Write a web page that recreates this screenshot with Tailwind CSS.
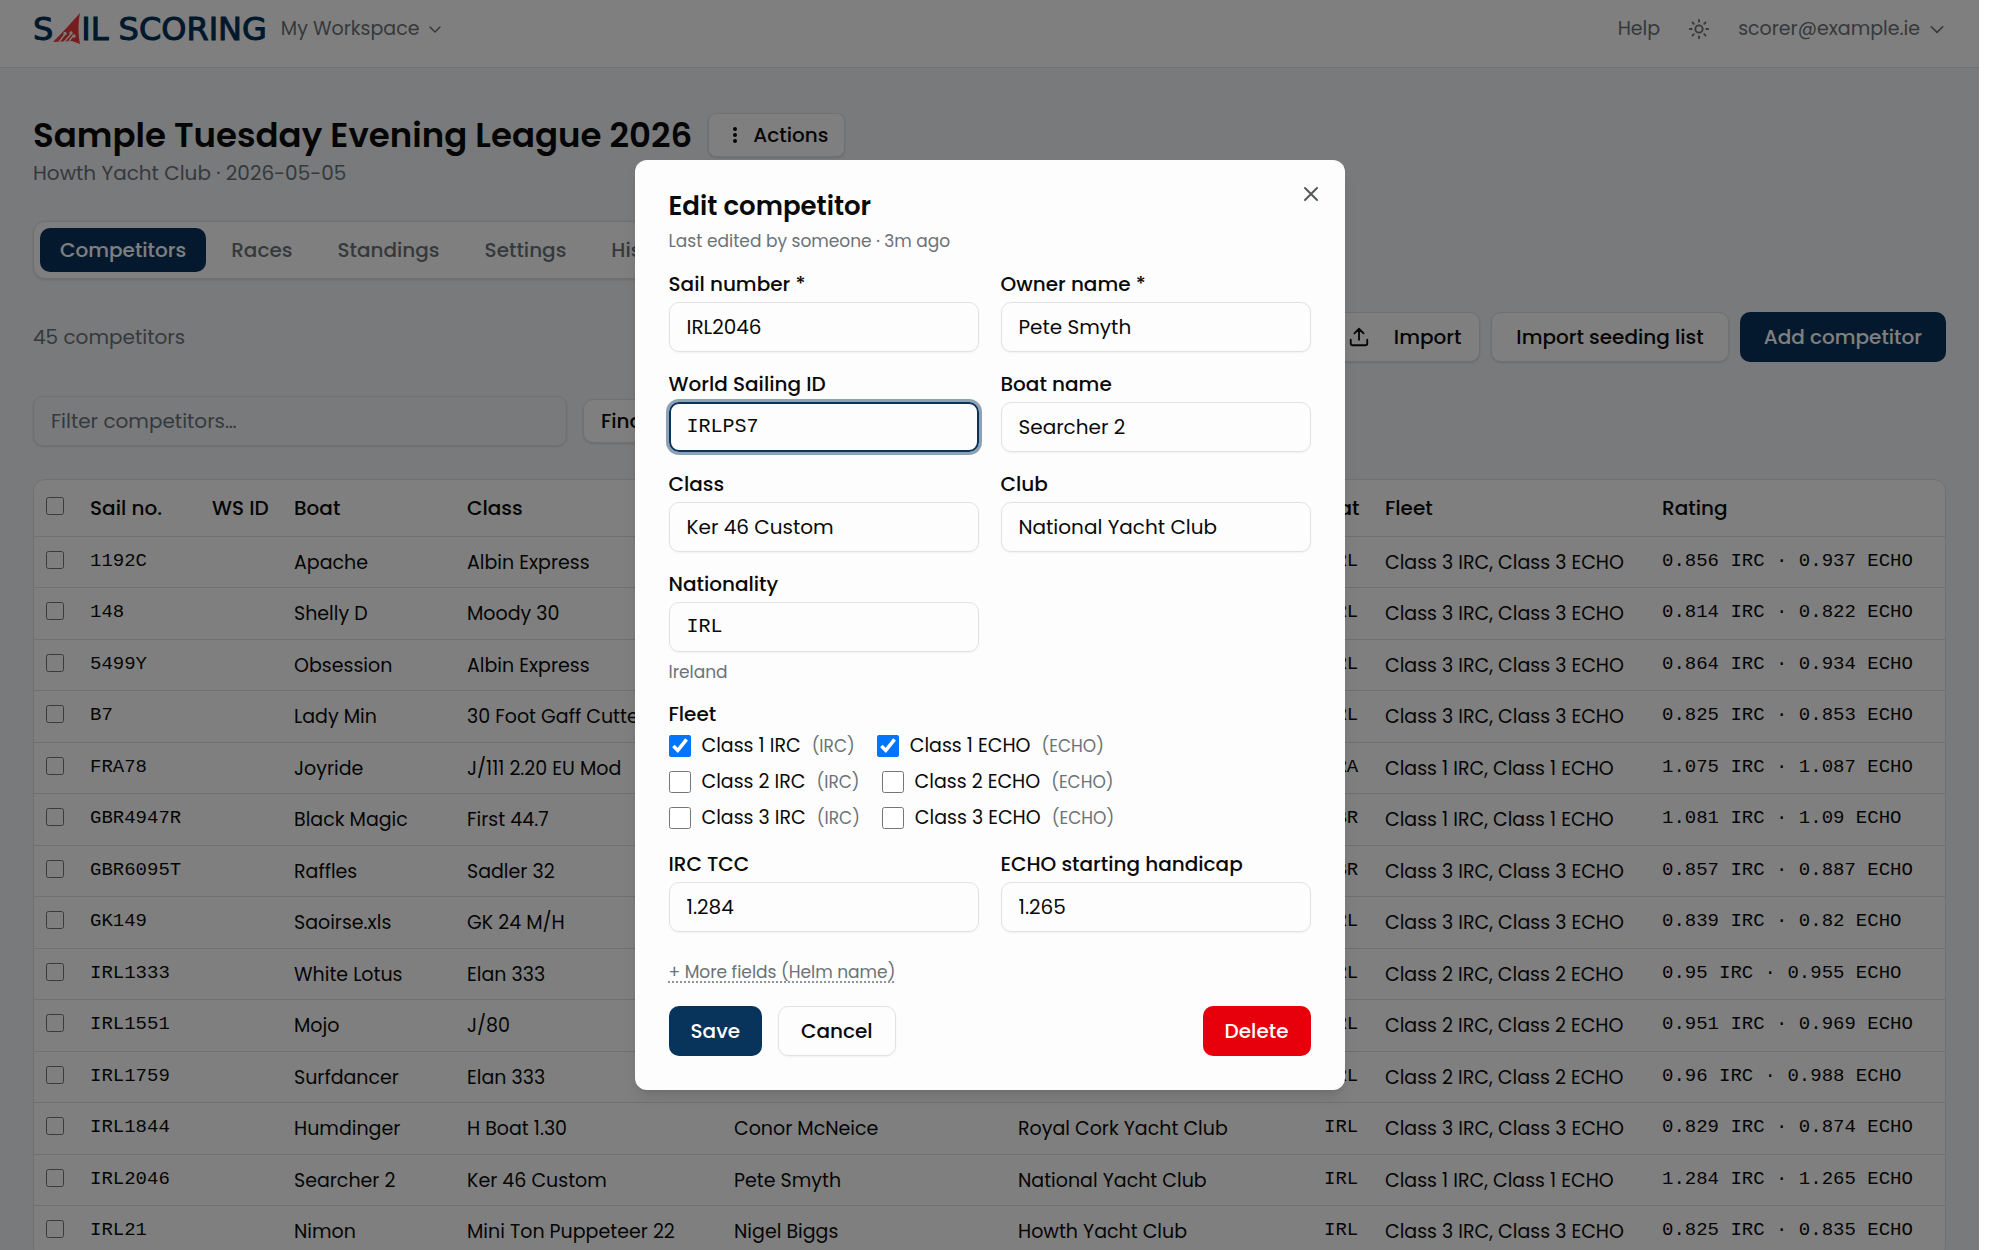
<!DOCTYPE html>
<html lang="en">
<head>
    <meta charset="UTF-8">
    <meta name="viewport" content="width=device-width, initial-scale=1.0">
    <title>Sail Scoring - Competitors</title>
    <script src="https://cdn.jsdelivr.net/npm/@tailwindcss/browser@4"></script>
</head>
<body class="h-screen overflow-hidden bg-white font-[Poppins,Inter,sans-serif] text-[20px] leading-6 text-[#0a0a0a]">
    <div class="relative mr-[21px] h-full overflow-hidden bg-[#f2f5f8]">

        <!-- Header -->
        <header class="flex items-center justify-between border-b border-[#dde1e5] bg-white px-[33px] pt-[9px] pb-[18px] text-[19px] text-[#6b7278]">
            <div class="flex h-10 items-center gap-[14px]">
                <a href="#" aria-label="Sail Scoring" class="flex items-center font-['DejaVu_Sans'] text-[32px] leading-10 text-[#003057] [-webkit-text-stroke:1px_#003057]">
                    <span>S</span>
                    <svg class="h-8 w-7" viewBox="0 0 28 32">
                        <path d="M27 0C19 9 9 20 0 29l19-1 8 3c-2-9-2-21 0-31z" fill="#f03a3a"/>
                        <g stroke="#fff" stroke-width="1.3" fill="none">
                            <path d="M6 29l6-8M11 29l7-8M16 28l4-5"/>
                            <circle cx="12" cy="20.500" r="1"/><circle cx="18" cy="20" r="1"/><circle cx="21" cy="23" r="1"/>
                        </g>
                    </svg>
                    <span>IL</span>
                    <span class="ml-[10px]">SCORING</span>
                </a>
                <button class="flex items-center gap-2">
                    My Workspace
                    <svg class="size-4" viewBox="0 0 16 16" fill="none" stroke="currentColor" stroke-width="1.5" stroke-linecap="round" stroke-linejoin="round"><path d="M3 6l5 5 5-5"/></svg>
                </button>
            </div>
            <nav class="flex h-10 items-center gap-7">
                <a href="#">Help</a>
                <button aria-label="Toggle theme">
                    <svg class="block size-[22px]" viewBox="0 0 24 24" fill="none" stroke="currentColor" stroke-width="2" stroke-linecap="round"><circle cx="12" cy="12" r="4"/><path d="M12 2v2M12 20v2M4.900 4.900l1.400 1.400M17.700 17.700l1.400 1.400M2 12h2M20 12h2M6.300 17.700l-1.400 1.400M19.100 4.900l-1.400 1.400"/></svg>
                </button>
                <button class="flex items-center gap-2">
                    scorer@example.ie
                    <svg class="size-[18px]" viewBox="0 0 16 16" fill="none" stroke="currentColor" stroke-width="1.5" stroke-linecap="round" stroke-linejoin="round"><path d="M3 6l5 5 5-5"/></svg>
                </button>
            </nav>
        </header>

        <main class="px-[33px] pt-[45px]">
            <!-- Series title -->
            <div class="flex items-center gap-4">
                <h1 class="text-[34px] font-semibold leading-[44px]">Sample Tuesday Evening League 2026</h1>
                <button class="flex h-[44px] items-center gap-2 rounded-lg border border-[#dde1e5] bg-white px-4 font-medium shadow-sm">
                    <svg class="size-5" viewBox="0 0 20 20" fill="currentColor"><circle cx="10" cy="4" r="2"/><circle cx="10" cy="10" r="2"/><circle cx="10" cy="16" r="2"/></svg>
                    Actions
                </button>
            </div>
            <p class="mt-1 text-[#6b7278]">Howth Yacht Club · 2026-05-05</p>

            <!-- Tabs -->
            <nav class="mt-9 flex w-[760px] gap-[5px] rounded-xl border border-[#dde1e5] bg-white p-[6px] font-medium text-[#6b7278] shadow-sm">
                <a href="#" class="rounded-[10px] bg-[#08335a] px-5 py-[10px] text-white">Competitors</a>
                <a href="#" class="px-5 py-[10px]">Races</a>
                <a href="#" class="px-5 py-[10px]">Standings</a>
                <a href="#" class="px-5 py-[10px]">Settings</a>
                <a href="#" class="px-5 py-[10px]">History</a>
            </nav>

            <div class="mt-[33px] flex items-center justify-between">
                <p class="text-[#6b7278]">45 competitors</p>
                <div class="flex gap-[11px] font-medium">
                    <button class="flex h-[50px] items-center gap-6 rounded-[10px] border border-[#dde1e5] bg-white px-[18px] shadow-sm">
                        <svg class="size-[22px]" viewBox="0 0 24 24" fill="none" stroke="currentColor" stroke-width="2" stroke-linecap="round" stroke-linejoin="round"><path d="M12 15V3M7 8l5-5 5 5M3 15v4a2 2 0 0 0 2 2h14a2 2 0 0 0 2-2v-4"/></svg>
                        Import
                    </button>
                    <button class="h-[50px] rounded-[10px] border border-[#dde1e5] bg-white px-6 shadow-sm">Import seeding list</button>
                    <button class="h-[50px] rounded-[10px] bg-[#08335a] px-6 text-white">Add competitor</button>
                </div>
            </div>

            <div class="mt-[34px] flex items-center gap-4">
                <input type="text" aria-label="Filter competitors" placeholder="Filter competitors…" class="h-[50px] w-[534px] rounded-[10px] border border-[#dde1e5] px-[17px] shadow-sm placeholder:text-[#6b7278]">
                <button class="h-[44px] rounded-[10px] border border-[#dde1e5] bg-white px-[17px] font-medium shadow-sm">Find duplicates</button>
            </div>

            <!-- Competitors table -->
            <div class="mt-[33px] overflow-hidden rounded-xl border border-[#dde1e5] bg-white">
                <table class="w-full table-fixed text-left">
                    <thead>
                        <tr class="h-[56px] border-b border-[#dde1e5]">
                            <th class="w-[45px] pb-1 pl-3"><input type="checkbox" aria-label="Select all" class="block size-[18px]"></th>
                            <th class="w-[122px] pl-[11px] font-medium">Sail no.</th>
                            <th class="w-[82px] pl-[11px] font-medium">WS ID</th>
                            <th class="w-[173px] pl-[11px] font-medium">Boat</th>
                            <th class="w-[267px] pl-[11px] font-medium">Class</th>
                            <th class="w-[284px] pl-[11px] font-medium">Owner</th>
                            <th class="w-[306px] pl-[11px] font-medium">Club</th>
                            <th class="w-[61px] pl-[11px] font-medium">Nat</th>
                            <th class="w-[277px] pl-[11px] font-medium">Fleet</th>
                            <th class="pl-[11px] font-medium">Rating</th>
                        </tr>
                    </thead>
                    <tbody id="competitors" class="text-[19px]"></tbody>
                </table>
            </div>
        </main>

        <!-- Edit dialog -->
        <div class="absolute inset-0 flex items-center justify-center bg-black/50">
            <form role="dialog" aria-labelledby="dialogTitle" class="relative w-[710px] rounded-xl bg-[#fdfdfd] px-[34px] pt-[31px] pb-[34px] shadow-lg">
                <button type="button" aria-label="Close" class="absolute top-[23px] right-[23px] text-[#55595d]">
                    <svg class="block size-[22px]" viewBox="0 0 22 22" fill="none" stroke="currentColor" stroke-width="2" stroke-linecap="round"><path d="M5 5l12 12M17 5L5 17"/></svg>
                </button>
                <h2 id="dialogTitle" class="text-[26px] font-semibold leading-[30px]">Edit competitor</h2>
                <p class="mt-2 text-[17px] text-[#6b7278]">Last edited by someone · 3m ago</p>

                <div class="mt-[19px] grid grid-cols-2 gap-x-[22px] gap-y-5">
                    <div class="flex flex-col gap-[6px]">
                        <label for="sail" class="font-medium">Sail number *</label>
                        <input id="sail" type="text" value="IRL2046" class="h-[50px] rounded-[10px] border border-[#dfe3e6] px-[17px] shadow-xs">
                    </div>
                    <div class="flex flex-col gap-[6px]">
                        <label for="owner" class="font-medium">Owner name *</label>
                        <input id="owner" type="text" value="Pete Smyth" class="h-[50px] rounded-[10px] border border-[#dfe3e6] px-[17px] shadow-xs">
                    </div>
                    <div class="flex flex-col gap-[6px]">
                        <label for="wsid" class="font-medium">World Sailing ID</label>
                        <input id="wsid" type="text" value="IRLPS7" class="h-[50px] rounded-[10px] border-2 border-[#08335a] px-4 pb-[2px] font-['Liberation_Mono'] ring-3 ring-[#08335a]/45 outline-none">
                    </div>
                    <div class="flex flex-col gap-[6px]">
                        <label for="boat" class="font-medium">Boat name</label>
                        <input id="boat" type="text" value="Searcher 2" class="h-[50px] rounded-[10px] border border-[#dfe3e6] px-[17px] shadow-xs">
                    </div>
                    <div class="flex flex-col gap-[6px]">
                        <label for="class" class="font-medium">Class</label>
                        <input id="class" type="text" value="Ker 46 Custom" class="h-[50px] rounded-[10px] border border-[#dfe3e6] px-[17px] shadow-xs">
                    </div>
                    <div class="flex flex-col gap-[6px]">
                        <label for="club" class="font-medium">Club</label>
                        <input id="club" type="text" value="National Yacht Club" class="h-[50px] rounded-[10px] border border-[#dfe3e6] px-[17px] shadow-xs">
                    </div>
                    <div class="flex flex-col gap-[6px]">
                        <label for="nat" class="font-medium">Nationality</label>
                        <input id="nat" type="text" value="IRL" class="h-[50px] rounded-[10px] border border-[#dfe3e6] px-[17px] pb-[2px] font-['Liberation_Mono'] shadow-xs">
                        <p class="pt-[2px] text-[17px] text-[#6b7278]">Ireland</p>
                    </div>
                </div>

                <fieldset class="mt-[18px]">
                    <legend class="font-medium">Fleet</legend>
                    <div class="mt-2 flex flex-col gap-3 text-[19px]">
                        <div class="flex gap-[22px]">
                            <label class="flex items-center gap-[11px]"><input type="checkbox" checked class="size-[22px]">Class 1 IRC <span class="text-[17px] text-[#6b7278]">(IRC)</span></label>
                            <label class="flex items-center gap-[11px]"><input type="checkbox" checked class="size-[22px]">Class 1 ECHO <span class="text-[17px] text-[#6b7278]">(ECHO)</span></label>
                        </div>
                        <div class="flex gap-[22px]">
                            <label class="flex items-center gap-[11px]"><input type="checkbox" class="size-[22px]">Class 2 IRC <span class="text-[17px] text-[#6b7278]">(IRC)</span></label>
                            <label class="flex items-center gap-[11px]"><input type="checkbox" class="size-[22px]">Class 2 ECHO <span class="text-[17px] text-[#6b7278]">(ECHO)</span></label>
                        </div>
                        <div class="flex gap-[22px]">
                            <label class="flex items-center gap-[11px]"><input type="checkbox" class="size-[22px]">Class 3 IRC <span class="text-[17px] text-[#6b7278]">(IRC)</span></label>
                            <label class="flex items-center gap-[11px]"><input type="checkbox" class="size-[22px]">Class 3 ECHO <span class="text-[17px] text-[#6b7278]">(ECHO)</span></label>
                        </div>
                    </div>
                </fieldset>

                <div class="mt-[22px] grid grid-cols-2 gap-x-[22px]">
                    <div class="flex flex-col gap-[6px]">
                        <label for="tcc" class="font-medium">IRC TCC</label>
                        <input id="tcc" type="text" value="1.284" class="h-[50px] rounded-[10px] border border-[#dfe3e6] px-[17px] shadow-xs">
                    </div>
                    <div class="flex flex-col gap-[6px]">
                        <label for="echo" class="font-medium">ECHO starting handicap</label>
                        <input id="echo" type="text" value="1.265" class="h-[50px] rounded-[10px] border border-[#dfe3e6] px-[17px] shadow-xs">
                    </div>
                </div>

                <button type="button" class="mt-7 block text-[17px] text-[#6b7278] underline decoration-dotted underline-offset-4">+ More fields (Helm name)</button>

                <div class="mt-[22px] flex gap-4 font-medium">
                    <button type="submit" class="h-[50px] rounded-[10px] bg-[#08335a] px-[22px] text-white">Save</button>
                    <button type="button" class="h-[50px] rounded-[10px] border border-[#dfe3e6] px-[22px] shadow-xs">Cancel</button>
                    <button type="button" class="ml-auto h-[50px] rounded-[10px] bg-[#e7000b] px-[22px] text-white">Delete</button>
                </div>
            </form>
        </div>
    </div>

    <script>
        // sail no, boat, class, owner, club, nat, fleet number, IRC, ECHO
        const competitors = [
            ['1192C', 'Apache', 'Albin Express', '', '', 'IRL', 3, '0.856', '0.937'],
            ['148', 'Shelly D', 'Moody 30', '', '', 'IRL', 3, '0.814', '0.822'],
            ['5499Y', 'Obsession', 'Albin Express', '', '', 'IRL', 3, '0.864', '0.934'],
            ['B7', 'Lady Min', '30 Foot Gaff Cutter', '', '', 'IRL', 3, '0.825', '0.853'],
            ['FRA78', 'Joyride', 'J/111 2.20 EU Mod', '', '', 'FRA', 1, '1.075', '1.087'],
            ['GBR4947R', 'Black Magic', 'First 44.7', '', '', 'GBR', 1, '1.081', '1.09'],
            ['GBR6095T', 'Raffles', 'Sadler 32', '', '', 'GBR', 3, '0.857', '0.887'],
            ['GK149', 'Saoirse.xls', 'GK 24 M/H', '', '', 'IRL', 3, '0.839', '0.82'],
            ['IRL1333', 'White Lotus', 'Elan 333', '', '', 'IRL', 2, '0.95', '0.955'],
            ['IRL1551', 'Mojo', 'J/80', '', '', 'IRL', 2, '0.951', '0.969'],
            ['IRL1759', 'Surfdancer', 'Elan 333', '', '', 'IRL', 2, '0.96', '0.988'],
            ['IRL1844', 'Humdinger', 'H Boat 1.30', 'Conor McNeice', 'Royal Cork Yacht Club', 'IRL', 3, '0.829', '0.874'],
            ['IRL2046', 'Searcher 2', 'Ker 46 Custom', 'Pete Smyth', 'National Yacht Club', 'IRL', 1, '1.284', '1.265'],
            ['IRL21', 'Nimon', 'Mini Ton Puppeteer 22', 'Nigel Biggs', 'Howth Yacht Club', 'IRL', 3, '0.825', '0.835']
        ];

        const tableBody = document.getElementById('competitors');
        competitors.forEach(([sail, boat, cls, owner, club, nat, fleet, irc, echo]) => {
            const row = document.createElement('tr');
            row.className = 'odd:h-[51px] even:h-[52px] border-b border-[#dde1e5] whitespace-nowrap';
            row.innerHTML = `
                <td class="pb-1 pl-3"><input type="checkbox" aria-label="Select ${sail}" class="block size-[18px]"></td>
                <td class="pb-[2px] pl-[11px] font-['Liberation_Mono']">${sail}</td>
                <td></td>
                <td class="pt-[2px] pl-[11px]">${boat}</td>
                <td class="pt-[2px] pl-[11px]">${cls}</td>
                <td class="pt-[2px] pl-[11px]">${owner}</td>
                <td class="pt-[2px] pl-[11px]">${club}</td>
                <td class="pb-[2px] pl-[11px] font-['Liberation_Mono']">${nat}</td>
                <td class="pt-[2px] pl-[11px]">Class ${fleet} IRC, Class ${fleet} ECHO</td>
                <td class="pb-[2px] pl-[11px] font-['Liberation_Mono']">${irc} IRC · ${echo} ECHO</td>
            `;
            tableBody.appendChild(row);
        });
    </script>
</body>
</html>
